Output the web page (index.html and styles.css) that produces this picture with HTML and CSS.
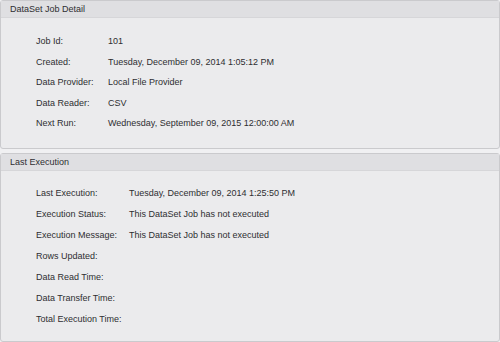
FILE: index.html
```html
<!DOCTYPE html>
<html>
<head>
<meta charset="utf-8">
<link rel="stylesheet" href="styles.css">
</head>
<body>
<div class="page">
  <section class="panel panel-detail">
    <div class="panel-header">DataSet Job Detail</div>
    <div class="panel-body grid-detail">
      <div class="label">Job Id:</div><div class="value">101</div>
      <div class="label">Created:</div><div class="value">Tuesday, December 09, 2014 1:05:12 PM</div>
      <div class="label">Data Provider:</div><div class="value">Local File Provider</div>
      <div class="label">Data Reader:</div><div class="value">CSV</div>
      <div class="label">Next Run:</div><div class="value">Wednesday, September 09, 2015 12:00:00 AM</div>
    </div>
  </section>
  <section class="panel panel-exec">
    <div class="panel-header">Last Execution</div>
    <div class="panel-body grid-exec">
      <div class="label">Last Execution:</div><div class="value">Tuesday, December 09, 2014 1:25:50 PM</div>
      <div class="label">Execution Status:</div><div class="value">This DataSet Job has not executed</div>
      <div class="label">Execution Message:</div><div class="value">This DataSet Job has not executed</div>
      <div class="label">Rows Updated:</div><div class="value"></div>
      <div class="label">Data Read Time:</div><div class="value"></div>
      <div class="label">Data Transfer Time:</div><div class="value"></div>
      <div class="label">Total Execution Time:</div><div class="value"></div>
    </div>
  </section>
</div>
</body>
</html>
```
FILE: styles.css
```css
html, body {
  margin: 0;
  padding: 0;
  background: #f0f0f2;
}
.page {
  width: 500px;
  height: 342px;
  display: flex;
  flex-direction: column;
  gap: 4px;
  font-family: "Liberation Sans", Arial, sans-serif;
  font-size: 9px;
  color: #2e2e31;
}
.panel {
  box-sizing: border-box;
  border: 1px solid #cacacd;
  border-radius: 3px;
  background: #ebebed;
  display: flex;
  flex-direction: column;
}
.panel-detail { height: 149px; }
.panel-exec { flex: 1; }
.panel-header {
  height: 16px;
  line-height: 16px;
  padding-left: 9px;
  background: #dfdfe2;
  border-bottom: 1px solid #d6d6d9;
}
.panel-body {
  display: grid;
  padding-left: 35px;
}
.grid-detail {
  grid-template-columns: 72px auto;
  grid-auto-rows: 20.5px;
  padding-top: 13px;
}
.grid-exec {
  grid-template-columns: 93px auto;
  grid-auto-rows: 21px;
  padding-top: 11px;
}
.label, .value {
  display: flex;
  align-items: center;
  white-space: nowrap;
}
```
